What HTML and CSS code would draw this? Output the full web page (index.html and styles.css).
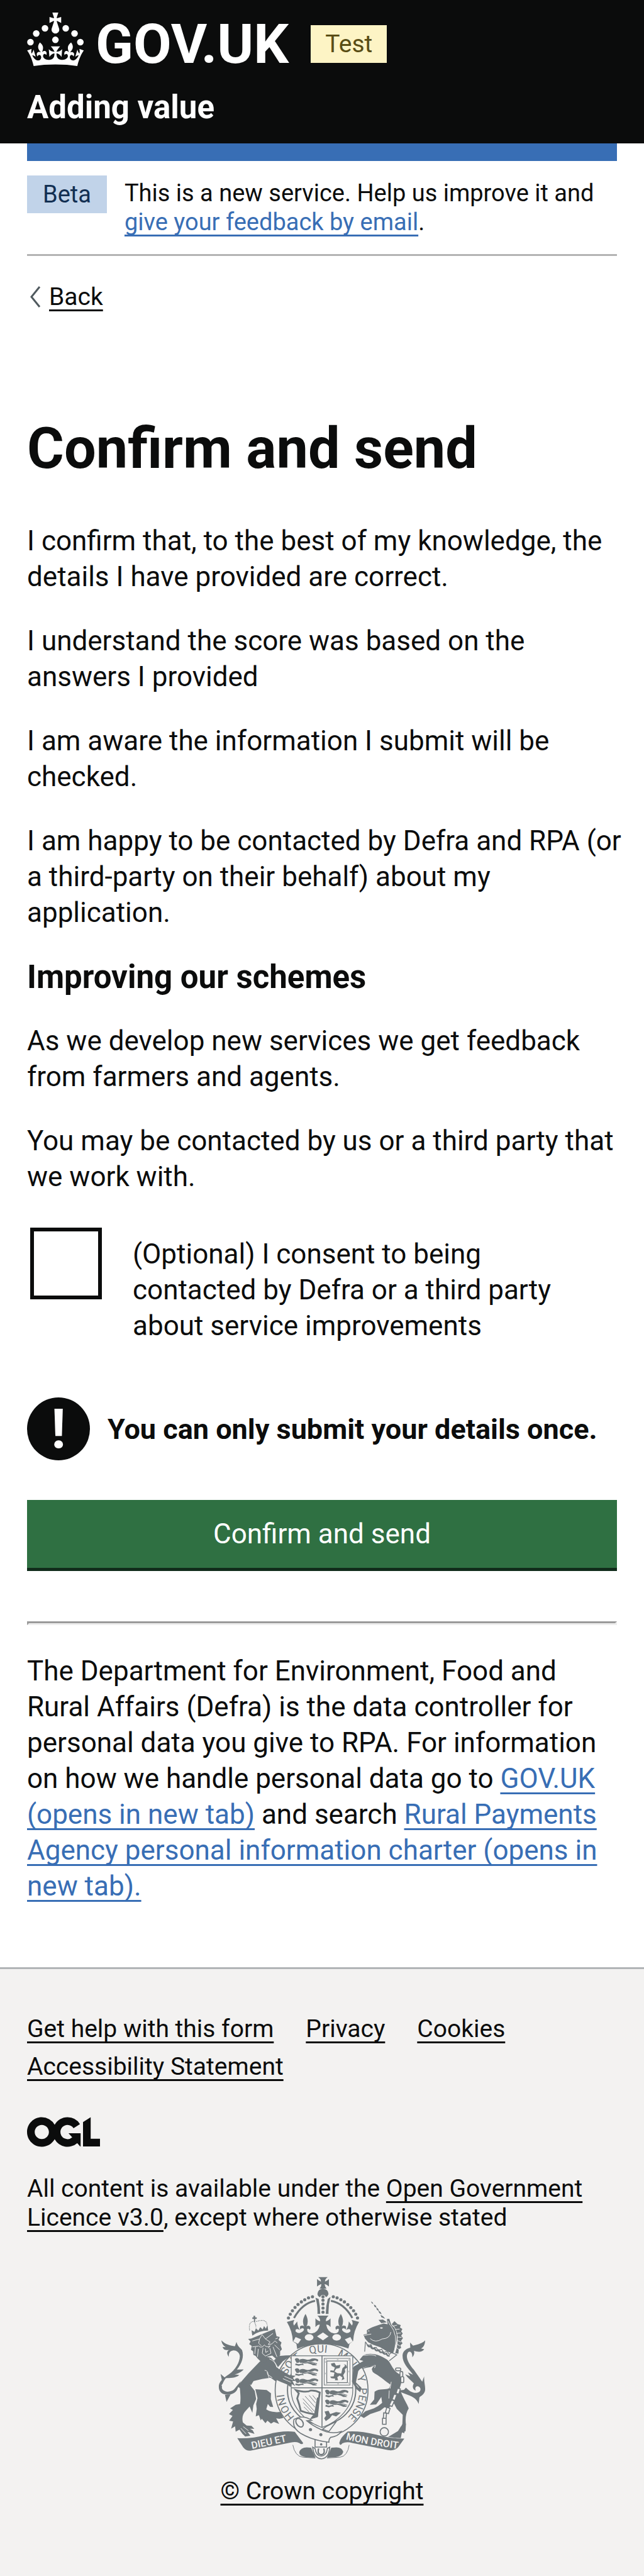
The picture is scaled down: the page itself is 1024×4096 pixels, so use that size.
FILE: index.html
```html
<!DOCTYPE html>
<html lang="en">
<head>
<meta charset="utf-8">
<meta name="viewport" content="width=device-width, initial-scale=1">
<title>Confirm and send - Adding value - GOV.UK</title>
<link rel="stylesheet" href="styles.css">
</head>
<body>
<header class="header">
  <div class="header-brand">
    <svg class="header-crown" viewBox="0 0 64 60" fill="currentColor" aria-hidden="true">
      <circle cx="20" cy="17.6" r="3.7"/><circle cx="10.2" cy="23.5" r="3.7"/><circle cx="3.7" cy="33.2" r="3.7"/><circle cx="31.7" cy="30.6" r="3.7"/><circle cx="43.3" cy="17.6" r="3.7"/><circle cx="53.2" cy="23.5" r="3.7"/><circle cx="59.7" cy="33.2" r="3.7"/>
      <path d="M33.1,9.8c.2-.1.3-.3.5-.5l4.6,2.4v-6.8l-4.6,1.5c-.1-.2-.3-.3-.5-.5l1.9-5.9h-6.7l1.9,5.9c-.2.1-.3.3-.5.5l-4.6-1.5v6.8l4.6-2.4c.1.2.3.3.5.5l-2.6,8c-.9,2.8,1.2,5.7,4.1,5.7h0c3,0,5.1-2.9,4.1-5.7l-2.6-8ZM37,37.9s-3.4,3.8-4.1,6.1c2.2,0,4.2-.5,6.4-2.8l-.7,8.5c-2-2.8-4.4-4.1-5.7-3.8.1,3.1.5,6.7,5.8,7.2,3.7.3,6.7-1.5,7-3.8.4-2.6-2-4.3-3.7-1.6-1.4-4.5,2.4-6.1,4.9-3.2-1.9-4.5-1.8-7.7,2.4-10.9,3,4,2.6,7.3-1.2,11.1,2.4-1.3,6.2,0,4,4.6-1.2-2.8-3.7-2.2-4.2.2-.3,1.7.7,3.7,3,4.2,1.9.3,4.7-.9,7-5.9-1.3,0-2.4.7-3.9,1.7l2.4-8c.6,2.3,1.4,3.7,2.2,4.5.6-1.6.5-2.8,0-5.3l5,1.8c-2.6,3.6-5.2,8.7-7.3,17.5-7.4-1.1-15.7-1.7-24.5-1.7h0c-8.8,0-17.1.6-24.5,1.7-2.1-8.9-4.7-13.9-7.3-17.5l5-1.8c-.5,2.5-.6,3.7,0,5.3.8-.8,1.6-2.3,2.2-4.5l2.4,8c-1.5-1-2.6-1.7-3.9-1.7,2.3,5,5.2,6.2,7,5.9,2.3-.4,3.3-2.4,3-4.2-.5-2.4-3-3.1-4.2-.2-2.2-4.6,1.6-6,4-4.6-3.7-3.7-4.2-7.1-1.2-11.1,4.2,3.2,4.3,6.4,2.4,10.9,2.5-2.8,6.3-1.3,4.9,3.2-1.8-2.7-4.1-1-3.7,1.6.3,2.3,3.3,4.1,7,3.8,5.4-.5,5.7-4.2,5.8-7.2-1.3-.2-3.7,1-5.7,3.8l-.7-8.5c2.2,2.3,4.2,2.7,6.4,2.8-.7-2.3-4.1-6.1-4.1-6.1h10.6,0Z"/>
    </svg>
    <span class="header-name">GOV.UK</span>
    <strong class="tag tag-test">Test</strong>
  </div>
  <div class="header-service">Adding value</div>
</header>

<div class="container">
  <div class="phase">
    <strong class="tag tag-beta">Beta</strong>
    <span class="phase-text">This is a new service. Help us improve it and <a class="link" href="#">give your feedback by email</a>.</span>
  </div>
  <div class="back">
    <svg class="back-icon" viewBox="0 0 18 34" aria-hidden="true"><path d="M16 1L3 17L16 33" fill="none" stroke="#505a5f" stroke-width="3"/></svg>
    <a class="link link-dark" href="#">Back</a>
  </div>

  <main class="main">
    <h1 class="title">Confirm and send</h1>
    <p class="para">I confirm that, to the best of my knowledge, the details I have provided are correct.</p>
    <p class="para">I understand the score was based on the answers I provided</p>
    <p class="para">I am aware the information I submit will be checked.</p>
    <p class="para">I am happy to be contacted by Defra and RPA (or a third-party on their behalf) about my application.</p>
    <h2 class="subtitle">Improving our schemes</h2>
    <p class="para">As we develop new services we get feedback from farmers and agents.</p>
    <p class="para">You may be contacted by us or a third party that we work with.</p>
    <form class="form">
      <div class="check">
        <input class="check-box" type="checkbox" id="consent">
        <label class="check-label" for="consent">(Optional) I consent to being contacted by Defra or a third party about service improvements</label>
      </div>
      <div class="warning">
        <span class="warning-icon" aria-hidden="true">!</span>
        <strong class="warning-text">You can only submit your details once.</strong>
      </div>
      <button class="button" type="button">Confirm and send</button>
    </form>
    <hr class="rule">
    <p class="para">The Department for Environment, Food and Rural Affairs (Defra) is the data controller for personal data you give to RPA. For information on how we handle personal data go to <a class="link" href="#">GOV.UK (opens in new tab)</a> and search <a class="link" href="#">Rural Payments Agency personal information charter (opens in new tab).</a></p>
  </main>
</div>

<footer class="footer">
  <ul class="footer-links">
    <li><a class="link link-dark" href="#">Get help with this form</a></li>
    <li><a class="link link-dark" href="#">Privacy</a></li>
    <li><a class="link link-dark" href="#">Cookies</a></li>
    <li><a class="link link-dark" href="#">Accessibility Statement</a></li>
  </ul>
  <svg class="ogl" viewBox="0 0 483.2 195.7" fill="currentColor" role="img" aria-label="Open Government Licence">
    <path d="M421.5 142.8V.1l-50.7 32.3v161.1h112.4v-50.7zm-122.3-9.6A47.12 47.12 0 0 1 221 97.8c0-26 21.1-47.1 47.1-47.1 16.7 0 31.4 8.7 39.7 21.8l42.7-27.2A97.63 97.63 0 0 0 268.1 0c-36.5 0-68.3 20.1-85.1 49.7A98 98 0 0 0 97.8 0C43.9 0 0 43.9 0 97.8s43.9 97.8 97.8 97.8c36.5 0 68.3-20.1 85.1-49.7a97.76 97.76 0 0 0 149.6 25.4l19.4 22.2h3v-87.8h-80l24.3 27.5zM97.8 145c-26 0-47.1-21.1-47.1-47.1s21.1-47.1 47.1-47.1 47.1 21.1 47.1 47.1S123.8 145 97.8 145"/>
  </svg>
  <p class="licence">All content is available under the <a class="link link-dark" href="#">Open Government Licence v3.0</a>, except where otherwise stated</p>
  <div class="copyright">
    <svg class="arms" viewBox="54 46 1046 922" aria-hidden="true">
      <defs>
        <path id="garter" d="M575 808A190 190 0 0 1 385 618A190 190 0 0 1 765 618A190 190 0 0 1 575 808"/>
        <path id="scroll-left" d="M224 914Q340 890 440 868"/>
        <path id="scroll-right" d="M696 866Q800 892 950 912"/>
        <g id="leopard">
          <path d="M0 8q4-8 14-6l8 4l4 10l-8 10l-10-2zM26 8q14-6 28 0t32-4q18-4 30 4q6 8-4 10q-6-6-14-4q-12 8-30 4q-18 10-44 6zM4 28l16 4l20-4l6 8h-14l-12 4l-18-4zM58 26l20-2l24 6l10 8h-20l-12-6z"/>
          <path d="M34 22q14 8 30 2t48 6" fill="none" stroke="#6f777b" stroke-width="4"/>
        </g>
      </defs>
      <g fill="#6f777b" stroke="none">
        <!-- lion -->
        <g transform="translate(30 210)">
          <path d="M328 236L365 233L395 232L350 262L325 292L305 258Z"/>
          <path d="M232 265L175 325L120 388L133 398C136 430 138 455 134 478L112 482L84 500L98 508L78 528L96 538L79 562L99 566L89 602L109 590L112 617L131 607L146 628L160 642L186 638L172 618L207 628L198 611L184 602L206 603L192 588L167 586L148 570C142 545 150 525 160 515L182 490L196 522L201 485L215 452L208 412L188 385L202 362L245 352L288 345L320 368L350 372L388 388L396 378L410 392L412 376L400 366L414 368L412 354L396 350L412 345L402 336L350 325L318 290L306 262L290 245L262 238Z"/>
          <path d="M211 403L268 407L290 424L289 452L301 493L286 492L274 478L266 505C285 520 320 520 338 517L352 548L332 552L316 550L331 578L304 568L290 577L272 562L262 574L244 552L238 560L229 534L213 540L218 502L215 478L222 448Z"/>
          <path d="M190 148L175 150L187 163L180 176L193 185L189 204L200 212L201 230L213 236L222 248L237 262L263 272L270 240L296 234L321 255L327 240L336 232L336 212L345 202L338 182L343 168L328 155L334 140L318 136L309 99Z"/>
          <path d="M138 362L118 408C96 442 28 440 27 394C25 368 45 350 78 328C110 305 132 270 133 236C130 215 112 206 98 208C80 210 76 225 78 240C65 225 66 208 82 205C62 208 50 205 46 190L62 192C50 184 42 174 40 157C60 178 85 184 108 187L116 165C122 190 136 195 144 206C156 240 142 275 118 304L152 303C140 318 122 325 106 328L130 332C112 348 82 346 62 348C44 372 38 395 46 405C60 422 92 416 104 404Z"/>
          <path d="M36 326L58 345L44 366ZM58 432L66 467L86 430Z"/>
          <path d="M40 385C45 372 66 362 84 370C94 380 86 392 78 398C86 380 60 374 54 392Z" fill="#f3f2f1"/>
          <g fill="none" stroke="#f3f2f1" stroke-width="3">
            <path d="M196 160L232 150L245 128L262 150L300 122M232 150L228 172L242 185M262 150L285 165L276 178L294 175L310 160L322 170M228 185Q242 200 256 180Q268 196 286 184L276 196M250 195L246 222L262 236L290 222L284 196M262 198L264 218L276 210M212 190L208 226M226 200L222 240M300 190L320 240M308 180L334 205M196 190L226 186M312 150L325 145"/>
            <path d="M282 250Q312 262 320 294M258 308Q275 308 275 330L296 345M270 318L282 350M350 332L392 352M348 345L388 368M345 355L378 378M210 405Q196 400 186 380M150 592L176 612M138 600L164 628"/>
          </g>
          <path d="M194 123L196 133Q230 108 276 108L272 80L264 98L255 85L248 102L236 90L226 108L214 96L207 114L192 106ZM202 33h8v8h8v8h-8v16h-6v-16h-8v-8h6z"/>
          <path d="M182 106Q176 60 204 62Q214 74 214 92M216 62Q266 45 270 78" fill="none" stroke="#6f777b" stroke-width="4" stroke-dasharray="4 4"/>
        </g>

        <!-- unicorn -->
        <g transform="translate(570 120)">
          <path d="M233 196C255 180 290 170 318 162L338 166L334 140L346 138L356 168C376 182 386 205 384 232C384 262 374 290 364 314L330 300L300 282L262 268L240 256L224 238L216 218L234 214Z"/>
          <path d="M224 252L260 284L300 302L345 318L382 318L348 350L222 304Z" fill="#f3f2f1"/>
          <path d="M372 150L388 165L404 170L400 182L412 190L406 202L414 212L406 224L415 236L405 250L413 262L402 272L406 285L394 292L392 314L376 312C388 280 392 240 384 205C378 185 368 172 358 166Z"/>
          <path d="M254 50L262 56L266 64L258 60ZM268 66L278 72L282 82L272 78ZM280 80L290 88L294 98L284 94ZM290 96L302 104L308 116L296 110ZM302 118L316 126L326 138L306 130ZM292 144L314 142L334 156L306 160Z"/>
          <path d="M215 322C255 305 310 322 344 352C362 380 372 408 404 420C414 435 408 462 398 490C420 548 436 566 444 590C430 612 426 640 430 670L424 690L422 715L410 710L404 740L366 738L395 705L412 668L414 622L384 592L370 565L340 590L322 584L300 602L250 618L218 638L200 628L226 604L268 590L290 578L310 562L306 532L280 570L248 572L270 545L272 506C295 488 330 498 346 488L352 470C330 455 300 430 280 418C255 405 250 390 272 374L248 382C205 386 182 405 184 430L178 460L200 485L202 500L186 506L166 485L158 450L165 380C180 365 200 362 220 352L196 345Z"/>
          <path d="M384 500L420 496L430 485C450 505 470 516 490 510C508 505 508 482 490 478C478 478 474 488 480 500C462 494 462 478 470 464C455 448 440 438 426 418L452 428L440 408L466 420C440 385 412 362 413 322C414 300 436 286 452 284L451 258L466 274C490 268 514 262 527 247C526 268 518 284 506 288L522 292C512 308 490 306 470 300C474 308 472 322 462 332C464 310 452 298 442 306C425 328 440 360 470 395L512 455L522 428C520 460 530 480 526 502C520 522 504 528 498 534L494 568C488 548 470 534 450 526Z"/>
          <path d="M298 184q10-6 16 0q-6 8-16 0zM238 200l6-4l2 6z" fill="#f3f2f1"/>
          <g fill="none" stroke="#f3f2f1" stroke-width="3">
            <path d="M250 238Q275 262 310 240Q350 238 354 205M220 222L255 215M340 150L350 170M352 170Q392 220 372 300M385 170L362 176M398 190L376 192M404 210L382 212M408 232L386 230M406 256L388 248M400 276L386 266M396 295L384 284"/>
            <path d="M198 390L250 372H276L272 386M250 384L260 402M186 462L204 482M206 322L230 322Q260 316 280 326M356 456L350 490M346 500L344 540"/>
          </g>
          <path d="M226 254L222 304M226 254L238 274L254 268L262 286L280 282L290 298L308 292L318 308L336 302L346 318L358 308L384 320L346 350" fill="none" stroke="#6f777b" stroke-width="4"/>
          <path d="M236 268q6 16 16 8q6 18 20 10q6 18 20 10q8 16 20 10q8 14 20 8q4 14 16 10" fill="none" stroke="#6f777b" stroke-width="8"/>
          <g fill="#f3f2f1" stroke="#6f777b" stroke-width="5">
            <rect x="378" y="386" width="26" height="14" rx="6"/><rect x="400" y="404" width="14" height="30" rx="6"/><rect x="404" y="430" width="15" height="30" rx="6"/>
          </g>
        </g>
        <g fill="#f3f2f1" stroke="#6f777b" stroke-width="5">
          <path d="M958 608l14 4l-8 26l-14-4zM940 638l14 4l-10 28l-14-5zM928 668l14 4l-12 28l-14-6zM904 704l16 6l-8 26l-16-4zM882 760h18v30h-18zM888 732l14 2l-2 26h-14z"/>
          <circle cx="891" cy="828" r="21"/>
        </g>
        <path d="M910 854L960 824L975 800L1000 790L998 825L968 836L948 858Z"/>

        <!-- garter and shield -->
        <circle cx="575" cy="618" r="234" fill="#f3f2f1" stroke="#6f777b" stroke-width="5"/>
        <circle cx="575" cy="618" r="172" fill="none" stroke="#6f777b" stroke-width="6"/>
        <g class="arms-text">
          <text><textPath href="#garter" startOffset="150">HONI</textPath></text>
          <text><textPath href="#garter" startOffset="375">SOIT</textPath></text>
          <text><textPath href="#garter" startOffset="537">QUI</textPath></text>
          <text><textPath href="#garter" startOffset="676">MAL</textPath></text>
          <text><textPath href="#garter" startOffset="825">Y</textPath></text>
          <text><textPath href="#garter" startOffset="882">PENSE</textPath></text>
        </g>
        <path d="M422 445H732V620C732 700 665 775 577 806C489 775 422 700 422 620Z" fill="#f3f2f1" stroke="#6f777b" stroke-width="4"/>
        <path d="M577 445V806M422 606H732" fill="none" stroke="#6f777b" stroke-width="5"/>
        <use href="#leopard" x="440" y="455"/><use href="#leopard" x="440" y="506"/><use href="#leopard" x="440" y="556"/>
        <use href="#leopard" x="592" y="614"/><use href="#leopard" x="592" y="664"/><path d="M590 726l20-4l8 16l30-10l24 4l-24 18l-20-6l-12 16l-20 14l-8-14l10-14z"/>
        <g fill="none" stroke="#6f777b">
          <rect x="588" y="458" width="130" height="134" stroke-width="3"/><rect x="601" y="471" width="104" height="109" stroke-width="4"/>
          <path d="M594 464H712V586H594Z" stroke-width="2" stroke-dasharray="8 50"/>
        </g>
        <path d="M622 484l18-4l8 14l22-4l-4 16l-18 4l-8 14l14 8l20 2l6-26l14-14l-8-6l12 2l6 14l-12 8l2 14l-10 16l6 20l-14 6l4-14l-14-10l-12 8l4 16h-16l2-8l-20-2l-6-8l18-2l4-18l-22-4l2-8l16 2l6-16l-16-8z"/>
        <path d="M446 618Q500 632 520 620Q545 618 566 630L562 655L552 750L526 758L540 740L500 732L470 722L462 690L452 660L460 634Z" fill="none" stroke="#6f777b" stroke-width="9"/>
        <path d="M480 660l60 66M482 680l48 50M486 702l26 26M492 648l50 56M512 644l32 38M530 644l18 22" stroke="#6f777b" stroke-width="3"/>
        <path d="M552 655h10L556 750L534 760Z"/>

        <!-- belt and buckle -->
        <g fill="#f3f2f1" stroke="#6f777b" stroke-width="5">
          <path d="M542 850V905H600V850Z"/>
          <path d="M612 826L650 775L600 800L580 815Z"/>
          <path d="M436 765Q480 740 525 770L500 772Q540 806 600 828Q640 838 674 826Q660 850 620 856Q610 866 612 880Q530 872 470 836Q424 806 436 765Z"/>
          <ellipse cx="464" cy="782" rx="16" ry="24" transform="rotate(-35 464 782)" stroke-width="6"/>
          <path d="M530 905L542 912Q548 950 574 950Q600 948 604 912L616 905Q612 962 574 964Q536 962 530 905Z"/>
        </g>
        <circle cx="519" cy="817" r="8"/><circle cx="571" cy="842" r="8"/><circle cx="573" cy="891" r="6"/>
        <path d="M560 912Q552 942 573 943Q594 942 586 912" fill="none" stroke="#6f777b" stroke-width="7"/>

        <!-- motto scroll -->
        <path d="M150 860Q220 864 300 842Q380 820 440 828L482 884Q478 896 462 884Q444 876 420 882L220 922Q196 926 180 906Z"/>
        <path d="M992 862Q920 862 850 842Q770 822 706 826Q668 858 664 884Q668 902 680 886Q700 876 730 884L910 920Q944 926 962 904Z"/>
        <path d="M462 930Q470 906 500 906L522 908L544 958Q462 960 462 930ZM684 928Q678 906 650 906L624 908L602 958Q680 960 684 928Z"/>
        <path d="M430 894Q440 950 480 956L544 960M714 894Q706 950 668 956L602 960" fill="none" stroke="#6f777b" stroke-width="3"/>
        <g class="arms-motto" fill="#f3f2f1">
          <text><textPath href="#scroll-left">DIEU ET</textPath></text>
          <text><textPath href="#scroll-right">MON DROIT</textPath></text>
        </g>

        <!-- royal crown -->
        <g transform="translate(360 30)">
          <path d="M198 18H246Q232 28 232 40Q240 40 252 28V66Q240 54 230 54Q232 66 240 76H204Q214 66 214 54Q204 54 192 66V28Q204 40 212 40Q212 28 198 18Z"/>
          <path d="M194 104A28 28 0 1 1 250 104Q246 116 236 120Q234 108 222 108Q210 108 208 120Q196 116 194 104Z"/>
          <path d="M184 122L200 128Q208 165 208 204H194Q196 160 184 122ZM260 118L246 128Q236 165 236 204H250Q248 160 260 118Z"/>
          <path d="M182 138Q118 150 76 224" fill="none" stroke="#6f777b" stroke-width="10"/>
          <path d="M262 138Q328 150 370 224" fill="none" stroke="#6f777b" stroke-width="10"/>
          <g><circle cx="222" cy="117" r="8"/><circle cx="222" cy="135" r="8"/><circle cx="222" cy="154" r="8"/><circle cx="222" cy="174" r="8"/><circle cx="222" cy="195" r="8"/>
          <circle cx="48" cy="224" r="8"/><circle cx="57" cy="205" r="8"/><circle cx="68" cy="188" r="8"/><circle cx="81" cy="171" r="8"/><circle cx="96" cy="156" r="8"/><circle cx="113" cy="143" r="8"/><circle cx="130" cy="132" r="8"/><circle cx="149" cy="123" r="8"/><circle cx="169" cy="117" r="8"/>
          <circle cx="396" cy="224" r="8"/><circle cx="387" cy="205" r="8"/><circle cx="376" cy="188" r="8"/><circle cx="362" cy="172" r="8"/><circle cx="347" cy="157" r="8"/><circle cx="330" cy="143" r="8"/><circle cx="312" cy="132" r="8"/><circle cx="293" cy="123" r="8"/><circle cx="274" cy="117" r="8"/></g>
          <path d="M40 244L78 234Q68 250 76 262L92 242Q94 272 106 284L92 280Q82 280 84 292Q104 310 124 288Q130 276 118 276Q112 276 108 282Q100 262 118 262Q126 262 128 268Q112 240 134 204Q154 240 138 268Q142 260 152 264Q164 270 156 284Q146 274 142 282Q142 302 166 302Q198 298 206 258Q196 256 184 270V226Q196 240 208 240Q208 224 194 212H250Q236 224 236 240Q248 240 260 226V270Q248 256 238 258Q246 298 278 302Q302 302 302 282Q298 274 288 284Q280 270 292 264Q302 260 306 268Q290 240 312 204Q332 240 316 268Q318 262 326 262Q344 262 336 282Q332 276 326 276Q314 276 320 288Q340 310 360 292Q362 280 352 280L338 284Q350 272 352 242L368 262Q376 250 366 234L404 244Q376 290 374 340L356 354L350 378Q290 356 222 356Q150 356 92 380L88 354L70 342Q68 290 40 244Z"/>
          <path d="M192 317L222 297L250 317L222 337Z" fill="#f3f2f1"/>
          <ellipse cx="152" cy="322" rx="22" ry="16" fill="#f3f2f1"/><ellipse cx="291" cy="322" rx="22" ry="16" fill="#f3f2f1"/>
          <path d="M84 320L112 332L96 354L72 342ZM360 320L332 332L350 356L372 342Z" fill="#f3f2f1"/>
        </g>

        <!-- lion's paw and unicorn's hoof over the shield -->
        <path d="M340 500L412 542L444 546L430 556L444 572L428 572L442 598L424 586L418 602L404 590L368 576L334 560Z"/>
        <path d="M848 490L800 500Q760 508 758 530L748 578L776 606L770 628L750 612L728 575L736 500L790 468L850 470Z"/>
        <path d="M380 560L420 578M388 548L430 566M750 590L762 606" stroke="#f3f2f1" stroke-width="3" fill="none"/>
      </g>
    </svg>
    <a class="link link-dark" href="#">© Crown copyright</a>
  </div>
</footer>
</body>
</html>
```
FILE: styles.css
```css
* {
  box-sizing: border-box;
}

body {
  margin: 0;
  background: #fff;
  color: #0b0c0c;
  font-family: Roboto, "Liberation Sans", sans-serif;
  font-size: 39px;
  line-height: 46px;
}

.link {
  color: #386eb5;
  text-decoration: underline;
  text-decoration-skip-ink: none;
  text-decoration-thickness: 3px;
  text-underline-offset: 7px;
}

.link-dark {
  color: #0b0c0c;
}

.tag {
  height: 60px;
  font-weight: 400;
  line-height: 60px;
}

.tag-test {
  margin: 0 0 5px 35px;
  padding: 0 23px;
  background: #fdf4c5;
  color: #594d15;
}

.tag-beta {
  padding: 0 25px;
  background: #c1d3e9;
  color: #122f52;
}

.header {
  padding: 20px 43px 29px;
  background: #0b0c0c;
  color: #fff;
}

.header-brand {
  display: flex;
  align-items: flex-end;
}

.header-crown {
  width: 91px;
  height: 85px;
}

.header-name {
  margin-left: 18px;
  font-size: 88px;
  font-weight: 700;
  line-height: 70px;
}

.header-service {
  margin-top: 37px;
  font-size: 51px;
  font-weight: 700;
  line-height: 57px;
}

.container {
  margin: 0 43px;
}

.phase {
  display: flex;
  align-items: flex-start;
  gap: 28px;
  padding: 23px 0 28px;
  border-top: 28px solid #386eb5;
  border-bottom: 3px solid #b3b3b3;
  font-size: 38px;
}

.phase-text {
  padding-top: 5px;
}

.back {
  display: flex;
  align-items: center;
  gap: 13px;
  margin-top: 42px;
  padding-left: 4px;
}

.back-icon {
  width: 18px;
  height: 34px;
}

.main {
  padding: 169px 0 100px;
}

.title {
  margin: 0 0 68px;
  font-size: 90px;
  font-weight: 700;
  line-height: 100px;
}

.subtitle {
  margin: 0 0 45px;
  font-size: 51px;
  font-weight: 700;
  line-height: 57px;
}

/* Text may run slightly into the page gutter before it wraps */
.para {
  margin: 0 -8px 45px 0;
  font-size: 44px;
  line-height: 57px;
}

.para:last-child {
  margin-bottom: 0;
}

.check {
  display: flex;
  align-items: flex-start;
  gap: 49px;
  margin-top: 52px;
  padding: 0 43px 0 5px;
}

.check-box {
  flex: none;
  width: 114px;
  height: 114px;
  margin: 0;
  border: 6px solid #0b0c0c;
  background: #fff;
  appearance: none;
}

.check-label {
  padding-top: 14px;
  font-size: 44px;
  line-height: 57px;
}

.warning {
  display: flex;
  align-items: center;
  gap: 28px;
  margin: 85px 0 63px;
}

.warning-icon {
  flex: none;
  width: 100px;
  height: 100px;
  border-radius: 50%;
  background: #0b0c0c;
  color: #fff;
  font-size: 88px;
  font-weight: 700;
  line-height: 100px;
  text-align: center;
}

.warning-text {
  font-size: 45px;
  line-height: 57px;
}

.button {
  display: block;
  width: 100%;
  height: 113px;
  padding: 0;
  border: 0;
  border-bottom: 5px solid #112c1b;
  background: #2f7042;
  color: #fff;
  font-family: inherit;
  font-size: 44px;
  line-height: 57px;
}

.rule {
  margin: 80px 0 45px;
  border: 3px inset #eee;
}

.footer {
  padding: 72px 43px 114px;
  border-top: 3px solid #b1b4b6;
  background: #f3f2f1;
}

.footer-links {
  display: flex;
  flex-wrap: wrap;
  gap: 14px 51px;
  margin: 0 0 57px;
  padding: 0;
  list-style: none;
}

.ogl {
  display: block;
  width: 116px;
  height: 48px;
}

.licence {
  margin: 43px 0 71px;
}

.copyright {
  display: flex;
  flex-direction: column;
  align-items: center;
  gap: 27px;
}

.arms {
  width: 330px;
  height: 291px;
}

.arms-text {
  font-size: 54px;
  font-weight: 400;
}

.arms-motto {
  font-size: 50px;
  font-weight: 500;
}
```
